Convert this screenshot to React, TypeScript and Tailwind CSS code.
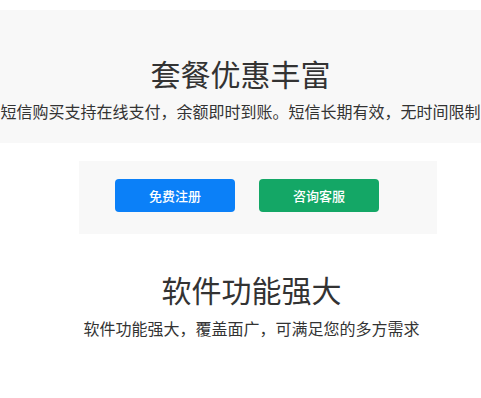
export default function App() {
  const font = { fontFamily: '"Noto Sans CJK SC", "Noto Sans", sans-serif' };
  return (
    <div className="min-h-[398px] w-[481px] bg-white text-[#333]" style={font}>
      <section className="mt-[10px] flex h-[133px] flex-col items-center bg-[#f8f8f8] pt-[43px]">
        <h2 className="text-[30px] leading-[40px] font-normal">套餐优惠丰富</h2>
        <p className="mt-[6px] whitespace-nowrap text-[16px] leading-[24px]">
          短信购买支持在线支付，余额即时到账。短信长期有效，无时间限制
        </p>
      </section>

      <div className="mt-[18px] ml-[79px] flex w-[358px] gap-[24px] bg-[#f8f8f8] pt-[18px] pb-[22px] pl-[36px]">
        <button
          type="button"
          className="flex h-[33px] w-[120px] items-center justify-center rounded-[4px] bg-[#0b80f8] text-[13px] font-medium text-white"
        >
          免费注册
        </button>
        <button
          type="button"
          className="flex h-[33px] w-[120px] items-center justify-center rounded-[4px] bg-[#14a766] text-[13px] font-medium text-white"
        >
          咨询客服
        </button>
      </div>

      <section className="mt-[35px] flex flex-col items-center pl-[22px]">
        <h2 className="text-[30px] leading-[40px] font-normal">软件功能强大</h2>
        <p className="mt-[7px] text-[16px] leading-[24px]">软件功能强大，覆盖面广，可满足您的多方需求</p>
      </section>
    </div>
  );
}
